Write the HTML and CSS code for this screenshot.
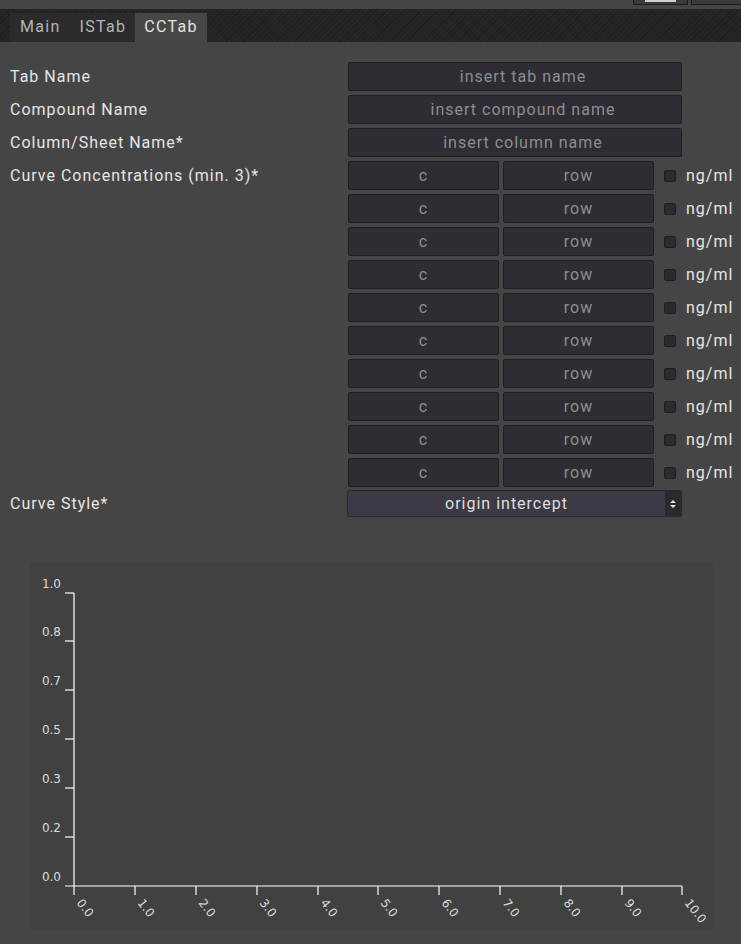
FILE: index.html
```html
<!DOCTYPE html>
<html>
<head>
<meta charset="utf-8">
<link rel="stylesheet" href="styles.css">
</head>
<body>
<div class="topbar">
  <div class="tb-btn"><span class="tb-icon"></span></div>
  <div class="tb-btn wide"></div>
</div>
<div class="tabbar">
  <div class="tabs">
    <div class="tab">Main</div>
    <div class="tab">ISTab</div>
    <div class="tab active">CCTab</div>
  </div>
</div>
<div class="form">
  <div class="label">Tab Name</div>
  <div class="ctrl"><div class="input full">insert tab name</div></div>
  <div class="label">Compound Name</div>
  <div class="ctrl"><div class="input full">insert compound name</div></div>
  <div class="label">Column/Sheet Name*</div>
  <div class="ctrl"><div class="input full">insert column name</div></div>
  <div class="label">Curve Concentrations (min. 3)*</div>
  <div class="ctrl conc-list">
    <div class="conc"><div class="input half">c</div><div class="input half">row</div><span class="check"></span><span class="unit">ng/ml</span></div>
    <div class="conc"><div class="input half">c</div><div class="input half">row</div><span class="check"></span><span class="unit">ng/ml</span></div>
    <div class="conc"><div class="input half">c</div><div class="input half">row</div><span class="check"></span><span class="unit">ng/ml</span></div>
    <div class="conc"><div class="input half">c</div><div class="input half">row</div><span class="check"></span><span class="unit">ng/ml</span></div>
    <div class="conc"><div class="input half">c</div><div class="input half">row</div><span class="check"></span><span class="unit">ng/ml</span></div>
    <div class="conc"><div class="input half">c</div><div class="input half">row</div><span class="check"></span><span class="unit">ng/ml</span></div>
    <div class="conc"><div class="input half">c</div><div class="input half">row</div><span class="check"></span><span class="unit">ng/ml</span></div>
    <div class="conc"><div class="input half">c</div><div class="input half">row</div><span class="check"></span><span class="unit">ng/ml</span></div>
    <div class="conc"><div class="input half">c</div><div class="input half">row</div><span class="check"></span><span class="unit">ng/ml</span></div>
    <div class="conc"><div class="input half">c</div><div class="input half">row</div><span class="check"></span><span class="unit">ng/ml</span></div>
  </div>
  <div class="label style-label">Curve Style*</div>
  <div class="ctrl style-ctrl">
    <div class="select">
      <span class="select-text">origin intercept</span>
      <span class="select-arrow">
        <svg width="8" height="10" viewBox="0 0 8 10"><path d="M4 1 L7 4 L1 4 Z M4 9 L7 6 L1 6 Z" fill="#e8e8e8"/></svg>
      </span>
    </div>
  </div>
</div>
<div class="plot">
  <svg width="683" height="367" viewBox="0 0 683 367" class="chart">
    <g class="yaxis">
      <line x1="44" y1="30" x2="44" y2="323"/>
      <line x1="35" y1="30" x2="44" y2="30"/>
      <line x1="35" y1="78" x2="44" y2="78"/>
      <line x1="35" y1="127" x2="44" y2="127"/>
      <line x1="35" y1="176" x2="44" y2="176"/>
      <line x1="35" y1="225" x2="44" y2="225"/>
      <line x1="35" y1="274" x2="44" y2="274"/>
      <text x="31" y="25">1.0</text>
      <text x="31" y="73">0.8</text>
      <text x="31" y="122">0.7</text>
      <text x="31" y="171">0.5</text>
      <text x="31" y="220">0.3</text>
      <text x="31" y="269">0.2</text>
      <text x="31" y="318">0.0</text>
    </g>
    <g class="xaxis">
      <line x1="35" y1="323" x2="652" y2="323"/>
      <line x1="44" y1="323" x2="44" y2="332"/>
      <line x1="105" y1="323" x2="105" y2="332"/>
      <line x1="166" y1="323" x2="166" y2="332"/>
      <line x1="227" y1="323" x2="227" y2="332"/>
      <line x1="288" y1="323" x2="288" y2="332"/>
      <line x1="348" y1="323" x2="348" y2="332"/>
      <line x1="409" y1="323" x2="409" y2="332"/>
      <line x1="470" y1="323" x2="470" y2="332"/>
      <line x1="531" y1="323" x2="531" y2="332"/>
      <line x1="592" y1="323" x2="592" y2="332"/>
      <line x1="652" y1="323" x2="652" y2="332"/>
      <text transform="translate(46,340) rotate(52)">0.0</text>
      <text transform="translate(107,340) rotate(52)">1.0</text>
      <text transform="translate(168,340) rotate(52)">2.0</text>
      <text transform="translate(229,340) rotate(52)">3.0</text>
      <text transform="translate(290,340) rotate(52)">4.0</text>
      <text transform="translate(350,340) rotate(52)">5.0</text>
      <text transform="translate(411,340) rotate(52)">6.0</text>
      <text transform="translate(472,340) rotate(52)">7.0</text>
      <text transform="translate(533,340) rotate(52)">8.0</text>
      <text transform="translate(594,340) rotate(52)">9.0</text>
      <text transform="translate(654,340) rotate(52)">10.0</text>
    </g>
  </svg>
</div>
</body>
</html>
```

FILE: styles.css
```css
html, body {
  margin: 0;
  padding: 0;
  background: #454545;
  width: 741px;
  height: 944px;
  overflow: hidden;
  font-family: Roboto, "Noto Sans", sans-serif;
}

.topbar {
  height: 9px;
  display: flex;
  justify-content: flex-end;
  gap: 3px;
  background: #454545;
}

.tb-btn {
  width: 53px;
  height: 4px;
  border: 1px solid #1c1c1c;
  border-top: none;
  background: #3a3a3a;
  display: flex;
  justify-content: center;
}

.tb-btn.wide {
  width: 49px;
  border-right: none;
}

.tb-icon {
  width: 31px;
  height: 2px;
  background: #cfcfcf;
}

.tabbar {
  height: 33px;
  background-color: #242424;
  background-image: repeating-linear-gradient(45deg, rgba(255,255,255,0.02) 0 1px, transparent 1px 3px), repeating-linear-gradient(-45deg, rgba(0,0,0,0.15) 0 1px, transparent 1px 4px);
  padding-left: 10px;
  display: flex;
  align-items: flex-end;
}

.tabs {
  display: flex;
  height: 29px;
  background: #2b2b2b;
}

.tab {
  height: 29px;
  line-height: 27px;
  padding: 0 9px 0 10px;
  color: #b4b4b4;
  font-size: 16px;
  letter-spacing: 1.3px;
}

.tab.active {
  background: #474747;
  color: #e2e2e2;
  padding: 0 9px 0 9px;
}

.form {
  display: grid;
  grid-template-columns: 338px 334px;
  row-gap: 4px;
  padding: 20px 0 0 10px;
}

.label {
  height: 29px;
  line-height: 29px;
  color: #e6e6e6;
  font-size: 16px;
  letter-spacing: 1px;
  white-space: nowrap;
}

.ctrl {
  min-width: 0;
}

.input {
  box-sizing: border-box;
  height: 29px;
  background: #2e2d34;
  border: 1px solid #1f1f22;
  border-radius: 2px;
  color: #8e8e8e;
  font-size: 16px;
  letter-spacing: 1px;
  text-align: center;
  line-height: 27px;
  white-space: nowrap;
}

.input.full {
  padding-left: 16px;
}

.conc-list {
  display: flex;
  flex-direction: column;
  gap: 4px;
}

.conc {
  display: flex;
  align-items: center;
  gap: 4px;
  width: 400px;
}

.input.half {
  width: 151px;
  flex: none;
}

.check {
  flex: none;
  box-sizing: border-box;
  width: 12px;
  height: 12px;
  margin-left: 6px;
  background: #2b2b2f;
  border: 1px solid #202022;
  border-radius: 2px;
}

.unit {
  margin-left: 6px;
  color: #e6e6e6;
  font-size: 16px;
  letter-spacing: 1px;
}

.style-label {
  margin-top: -1px;
  height: 27px;
  line-height: 27px;
}

.style-ctrl {
  margin-top: -1px;
  margin-left: -1px;
}

.select {
  box-sizing: border-box;
  display: flex;
  height: 27px;
  width: 335px;
  background: #3c3b45;
  border: 1px solid #2a2a2e;
  border-radius: 2px;
}

.select-text {
  flex: 1;
  text-align: center;
  line-height: 25px;
  color: #dedede;
  font-size: 16px;
  letter-spacing: 1px;
}

.select-arrow {
  width: 16px;
  background: #2a2a2e;
  display: flex;
  align-items: center;
  justify-content: center;
}

.plot {
  margin: 46px 0 0 30px;
  width: 683px;
  height: 367px;
  background: #414141;
}

.chart {
  display: block;
}

.chart line {
  stroke: #ffffff;
  stroke-width: 1.2;
}

.chart text {
  font-family: "DejaVu Sans", sans-serif;
  font-size: 12px;
  fill: #dcdcdc;
}

.yaxis text {
  text-anchor: end;
}
```
